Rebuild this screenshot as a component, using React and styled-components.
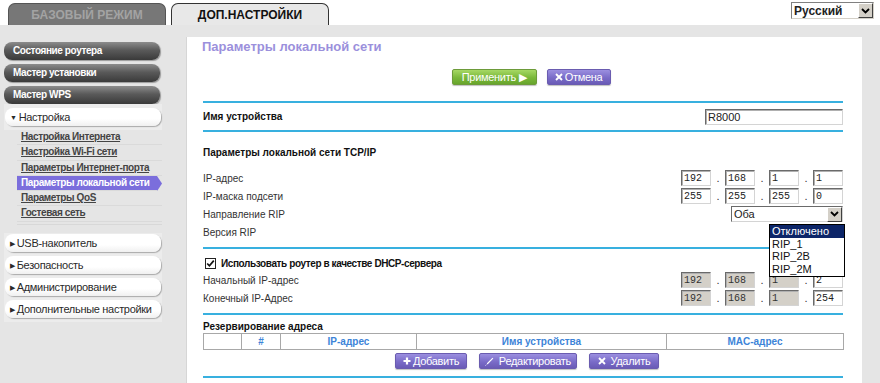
import React from "react";
import styled, { createGlobalStyle, css } from "styled-components";

const sans = `"Liberation Sans", Arial, sans-serif`;

const GlobalStyle = createGlobalStyle`
  html, body { margin: 0; padding: 0; background: #fff; }
  body {
    font-family: ${sans};
    font-size: 11px;
    color: #222;
  }
`;

const Page = styled.div`
  width: 880px;
  height: 383px;
  overflow: hidden;
  display: flex;
  flex-direction: column;
`;

const TopBar = styled.div`
  height: 25px;
  flex: none;
  display: flex;
  align-items: flex-end;
  gap: 5px;
  padding: 0 6px 0 8px;
  background: #fff;
`;

const Tab = styled.div`
  width: 158px;
  height: 22px;
  box-sizing: border-box;
  border: 1px solid #555;
  border-bottom: none;
  border-radius: 7px 7px 0 0;
  font-weight: bold;
  font-size: 12px;
  line-height: 22px;
  text-align: center;
  ${(p) =>
    p.active
      ? css`
          background: #e8e8e8;
          border-color: #333;
          color: #111;
        `
      : css`
          background: #777;
          color: #a3a3a3;
        `}
`;

const LangSelect = styled.div`
  margin-left: auto;
  align-self: flex-start;
  margin-top: 2px;
  width: 83px;
  height: 17px;
  box-sizing: border-box;
  border: 1px solid;
  border-color: #808080 #d4d0c8 #d4d0c8 #808080;
  display: flex;
  align-items: center;
  justify-content: space-between;
  font-weight: bold;
  font-size: 12px;
  padding-left: 2px;
`;

const Chevron = styled.span`
  width: 15px;
  height: 15px;
  box-sizing: border-box;
  background: #d4d0c8;
  border: 1px solid;
  border-color: #fff #404040 #404040 #fff;
  display: flex;
  align-items: center;
  justify-content: center;
`;

const ChevronIcon = () => (
  <svg width="9" height="6" viewBox="0 0 9 6">
    <path d="M1 1 L4.5 4.5 L8 1" fill="none" stroke="#000" strokeWidth="1.8" />
  </svg>
);

const Main = styled.div`
  flex: 1;
  display: flex;
  background: #e5e5e5;
`;

/* ---------- sidebar ---------- */

const Sidebar = styled.div`
  width: 186px;
  flex: none;
  box-sizing: border-box;
  padding: 17px 0 0 4px;
  display: flex;
  flex-direction: column;
`;

const DarkStack = styled.div`
  display: flex;
  flex-direction: column;
  gap: 4px;
`;

const DarkButton = styled.div`
  width: 156px;
  height: 18px;
  box-sizing: border-box;
  border-radius: 8px;
  background: linear-gradient(#8c8c8c, #5a5a5a 45%, #3a3a3a);
  box-shadow: 1px 1px 1px #9a9a9a;
  color: #fff;
  font-weight: bold;
  font-size: 10px;
  letter-spacing: -0.4px;
  line-height: 18px;
  padding-left: 9px;
`;

const LightGroup = styled.div`
  width: 158px;
  background: #ececec;
  display: flex;
  flex-direction: column;
  gap: 4px;
  padding: ${(p) => p.pad};
  margin-top: ${(p) => p.mt || 0}px;
  box-sizing: border-box;
`;

const LightButton = styled.div`
  width: 156px;
  height: 18px;
  box-sizing: border-box;
  border-radius: 8px;
  background: linear-gradient(#fff, #fff 60%, #f0f0f0);
  box-shadow: 1px 1px 1px #aaa;
  color: #2a2a2a;
  font-size: 11px;
  letter-spacing: -0.3px;
  line-height: 18px;
  padding-left: 5px;
  white-space: nowrap;
  span {
    font-size: 7px;
    margin-right: 2px;
    vertical-align: 1px;
  }
`;

const SubList = styled.div`
  margin-left: 13px;
  width: 145px;
  border-bottom: 1px solid #d8d8d8;
  padding-bottom: 2px;
`;

const SubLink = styled.div`
  height: 15.3px;
  box-sizing: border-box;
  line-height: 14px;
  padding-left: 4px;
  font-weight: bold;
  font-size: 10px;
  letter-spacing: -0.4px;
  white-space: nowrap;
  border-bottom: 1px solid #dadada;
  ${(p) =>
    p.selected
      ? css`
          background: #7b6edc;
          color: #fff;
          clip-path: polygon(0 0, 140px 0, 145px 50%, 140px 100%, 0 100%);
        `
      : css`
          color: #444;
          text-decoration: underline;
        `}
`;

/* ---------- content ---------- */

const Panel = styled.div`
  margin-top: 12px;
  width: 676px;
  box-sizing: border-box;
  background: #fff;
  border-left: 1px solid #d6d6d6;
  padding: 0 19px 0 16px;
  display: flex;
  flex-direction: column;
`;

const Title = styled.div`
  padding-top: 2px;
  line-height: 16px;
  font-size: 13px;
  font-weight: bold;
  color: #9b90dc;
  margin-left: -1px;
`;

const ButtonRow = styled.div`
  display: flex;
  justify-content: center;
  gap: ${(p) => p.gap}px;
  margin-top: ${(p) => p.mt}px;
  padding-left: ${(p) => p.shift}px;
`;

const ActionButton = styled.div`
  height: 16px;
  width: ${(p) => p.w}px;
  box-sizing: border-box;
  border-radius: 2px;
  display: flex;
  align-items: center;
  justify-content: center;
  gap: 2px;
  color: #fff;
  font-size: 11px;
  letter-spacing: -0.3px;
  box-shadow: 0 1px 1px rgba(0, 0, 0, 0.25);
  ${(p) =>
    p.green
      ? css`
          background: linear-gradient(#a6d864, #7ab83a 55%, #68a52c);
          border: 1px solid #6d9b3a;
        `
      : css`
          background: linear-gradient(#9b8fe0, #7a6cc8 55%, #6a5bb6);
          border: 1px solid #6a5cb0;
        `}
`;

const Divider = styled.div`
  height: 2px;
  background: #38b0df;
  margin-top: ${(p) => p.mt}px;
`;

const DeviceRow = styled.div`
  height: 27px;
  display: flex;
  align-items: center;
  justify-content: space-between;
  font-weight: bold;
  font-size: 10px;
  color: #111;
`;

const Heading = styled.div`
  margin-top: ${(p) => p.mt}px;
  line-height: ${(p) => p.lh || 16}px;
  font-weight: bold;
  font-size: 10px;
  color: #111;
`;

const Row = styled.div`
  height: 18px;
  display: flex;
  align-items: center;
  justify-content: space-between;
  margin-top: ${(p) => p.mt || 0}px;
  font-size: 10px;
  color: #333;
`;

const Field = styled.input`
  width: ${(p) => p.w}px;
  height: 16px;
  box-sizing: border-box;
  margin: 0;
  padding: 0 2px;
  border: 1px solid;
  border-color: #6a6a6a #d4d4d4 #d4d4d4 #6a6a6a;
  box-shadow: inset 1px 1px 0 #b0b0b0;
  outline: none;
  font-family: ${(p) => (p.mono ? `"Liberation Mono", "Courier New", monospace` : sans)};
  font-size: ${(p) => (p.mono ? 10 : 11)}px;
  color: #222;
  background: ${(p) => (p.disabled ? "#d4d0c8" : "#fff")};
  ${(p) => p.disabled && css`color: #333;`}
`;

const IpGroup = styled.div`
  display: flex;
  align-items: center;
`;

const Dot = styled.span`
  width: 14px;
  text-align: center;
  font-size: 11px;
  color: #333;
`;

const IpFields = ({ values, disabledUpTo = 0 }) => (
  <IpGroup>
    {values.map((v, i) => (
      <React.Fragment key={i}>
        {i > 0 && <Dot>.</Dot>}
        <Field mono w={30} readOnly value={v} disabled={i < disabledUpTo} />
      </React.Fragment>
    ))}
  </IpGroup>
);

const SelectBox = styled.div`
  position: relative;
  width: 112px;
  height: 16px;
  box-sizing: border-box;
  border: 1px solid;
  border-color: #6a6a6a #d4d4d4 #d4d4d4 #6a6a6a;
  display: flex;
  align-items: center;
  justify-content: space-between;
  padding-left: 2px;
  font-size: 11px;
  color: #222;
`;

const DropList = styled.div`
  position: absolute;
  top: 17px;
  left: 37px;
  width: 76px;
  box-sizing: border-box;
  border: 1px solid #000;
  background: #fff;
  z-index: 5;
  padding-bottom: 1px;
`;

const DropItem = styled.div`
  height: 12.5px;
  line-height: 12.5px;
  padding-left: 2px;
  font-size: 11px;
  ${(p) =>
    p.active
      ? css`
          background: #0c2568;
          color: #fff;
        `
      : css`
          color: #111;
        `}
`;

const CheckRow = styled.div`
  height: 16px;
  margin-top: 6px;
  display: flex;
  align-items: center;
  gap: 5px;
  padding-left: 2px;
  font-weight: bold;
  font-size: 10px;
  letter-spacing: -0.4px;
  color: #111;
`;

const CheckBox = styled.span`
  width: 11px;
  height: 11px;
  box-sizing: border-box;
  border: 1px solid #222;
  background: #fff;
  display: flex;
  align-items: center;
  justify-content: center;
`;

const Table = styled.table`
  width: 640px;
  border-collapse: collapse;
  table-layout: fixed;
  th {
    height: 15px;
    padding: 0;
    border: 1px solid #a8a8a8;
    color: #3d84d8;
    font-size: 10px;
    font-weight: bold;
  }
`;

const PlusIcon = () => (
  <svg width="8" height="8" viewBox="0 0 8 8">
    <path d="M4 0.5 V7.5 M0.5 4 H7.5" stroke="#fff" strokeWidth="2.2" />
  </svg>
);

const CrossIcon = () => (
  <svg width="8" height="8" viewBox="0 0 8 8">
    <path d="M1 1 L7 7 M7 1 L1 7" stroke="#fff" strokeWidth="1.9" />
  </svg>
);

const PencilIcon = () => (
  <svg width="9" height="9" viewBox="0 0 9 9">
    <path d="M7.5 0.8 L8.3 1.6 L3 6.9 L1.6 7.5 L2.2 6.1 Z" fill="#fff" />
    <path d="M1.3 7.8 L0.6 8.5" stroke="#fff" strokeWidth="1" />
  </svg>
);

const sideLinks = [
  "Настройка Интернета",
  "Настройка Wi-Fi сети",
  "Параметры Интернет-порта",
  "Параметры локальной сети",
  "Параметры QoS",
  "Гостевая сеть",
];

const bottomMenus = ["USB-накопитель", "Безопасность", "Администрирование", "Дополнительные настройки"];

export default function App() {
  return (
    <Page>
      <GlobalStyle />
      <TopBar>
        <Tab>БАЗОВЫЙ РЕЖИМ</Tab>
        <Tab active>ДОП.НАСТРОЙКИ</Tab>
        <LangSelect>
          Русский
          <Chevron>
            <ChevronIcon />
          </Chevron>
        </LangSelect>
      </TopBar>

      <Main>
        <Sidebar>
          <DarkStack>
            <DarkButton>Состояние роутера</DarkButton>
            <DarkButton>Мастер установки</DarkButton>
            <DarkButton>Мастер WPS</DarkButton>
          </DarkStack>
          <LightGroup pad="4px 0 4px 1px">
            <LightButton>
              <span>▼</span>Настройка
            </LightButton>
          </LightGroup>
          <SubList>
            {sideLinks.map((l) => (
              <SubLink key={l} selected={l === "Параметры локальной сети"}>
                {l}
              </SubLink>
            ))}
          </SubList>
          <LightGroup pad="1px 0 4px 1px" mt={8}>
            {bottomMenus.map((m) => (
              <LightButton key={m}>
                <span>▶</span>
                {m}
              </LightButton>
            ))}
          </LightGroup>
        </Sidebar>

        <Panel>
          <Title>Параметры локальной сети</Title>
          <ButtonRow mt={14} gap={10} shift={16}>
            <ActionButton green w={85}>
              Применить ▶
            </ActionButton>
            <ActionButton w={64}>
              <CrossIcon />
              Отмена
            </ActionButton>
          </ButtonRow>

          <Divider mt={16} />
          <DeviceRow>
            Имя устройства
            <Field w={138} readOnly value="R8000" />
          </DeviceRow>
          <Divider mt={0} />

          <Heading mt={13}>Параметры локальной сети TCP/IP</Heading>
          <Row mt={8}>
            IP-адрес
            <IpFields values={["192", "168", "1", "1"]} />
          </Row>
          <Row>
            IP-маска подсети
            <IpFields values={["255", "255", "255", "0"]} />
          </Row>
          <Row>
            Направление RIP
            <SelectBox>
              Оба
              <Chevron>
                <ChevronIcon />
              </Chevron>
              <DropList>
                <DropItem active>Отключено</DropItem>
                <DropItem>RIP_1</DropItem>
                <DropItem>RIP_2B</DropItem>
                <DropItem>RIP_2M</DropItem>
              </DropList>
            </SelectBox>
          </Row>
          <Row>Версия RIP</Row>
          <Divider mt={6} />

          <CheckRow>
            <CheckBox>
              <svg width="9" height="9" viewBox="0 0 9 9">
                <path d="M1.2 4.5 L3.4 6.8 L7.8 1.6" fill="none" stroke="#111" strokeWidth="1.7" />
              </svg>
            </CheckBox>
            Использовать роутер в качестве DHCP-сервера
          </CheckRow>
          <Row>
            Начальный IP-адрес
            <IpFields values={["192", "168", "1", "2"]} disabledUpTo={3} />
          </Row>
          <Row>
            Конечный IP-Адрес
            <IpFields values={["192", "168", "1", "254"]} disabledUpTo={3} />
          </Row>
          <Divider mt={6} />

          <Heading mt={5} lh={13}>
            Резервирование адреса
          </Heading>
          <Table>
            <colgroup>
              <col style={{ width: 38 }} />
              <col style={{ width: 39 }} />
              <col style={{ width: 136 }} />
              <col style={{ width: 250 }} />
              <col style={{ width: 177 }} />
            </colgroup>
            <thead>
              <tr>
                <th></th>
                <th>#</th>
                <th>IP-адрес</th>
                <th>Имя устройства</th>
                <th>MAC-адрес</th>
              </tr>
            </thead>
          </Table>
          <ButtonRow mt={3} gap={12} shift={8}>
            <ActionButton w={72}>
              <PlusIcon />
              Добавить
            </ActionButton>
            <ActionButton w={98}>
              <PencilIcon />
              &nbsp;Редактировать
            </ActionButton>
            <ActionButton w={70}>
              <CrossIcon />
              &nbsp;Удалить
            </ActionButton>
          </ButtonRow>
          <Divider mt={7} />
        </Panel>
      </Main>
    </Page>
  );
}
